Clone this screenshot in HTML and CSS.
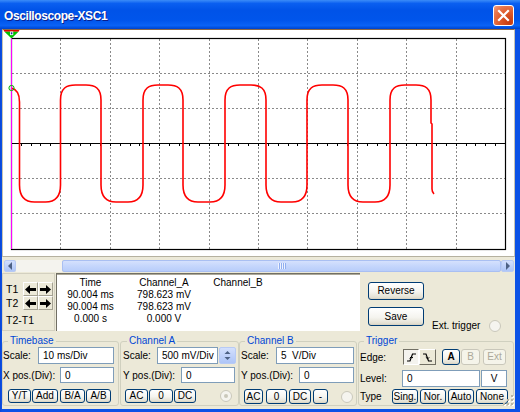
FILE: index.html
```html
<!DOCTYPE html>
<html>
<head>
<meta charset="utf-8">
<title>Oscilloscope-XSC1</title>
<link rel="stylesheet" href="styles.css">
</head>
<body>
<div class="window">
  <div class="titlebar">
    <span class="title">Oscilloscope-XSC1</span>
    <span class="close"><svg width="19" height="19" viewBox="0 0 19 19"><path d="M5 5 L14 14 M14 5 L5 14" stroke="#fff" stroke-width="2.2" stroke-linecap="square"/></svg></span>
  </div>
  <div class="client">
    <div class="graph">
      <svg class="scope" width="511" height="226" viewBox="3 30 511 226">
        <g stroke="#8a8a8a" stroke-width="1" stroke-dasharray="2 2" fill="none">
          <path d="M60.5 39V249M110.5 39V249M159.5 39V249M209.5 39V249M258.5 39V249M307.5 39V249M357.5 39V249M406.5 39V249M456.5 39V249"/>
          <path d="M12 73.5H505M12 108.5H505M12 178.5H505M12 213.5H505"/>
        </g>
        <path d="M11 143.5H505" stroke="#000" stroke-width="1"/>
        <path stroke="#000" stroke-width="1" d="M21.5 144v2M31.5 144v2M40.5 144v2M50.5 144v2M60.5 144v2M70.5 144v2M80.5 144v2M90.5 144v2M100.5 144v2M110.5 144v2M120.5 144v2M130.5 144v2M139.5 144v2M149.5 144v2M159.5 144v2M169.5 144v2M179.5 144v2M189.5 144v2M199.5 144v2M209.5 144v2M218.5 144v2M228.5 144v2M238.5 144v2M248.5 144v2M258.5 144v2M268.5 144v2M278.5 144v2M288.5 144v2M297.5 144v2M307.5 144v2M317.5 144v2M327.5 144v2M337.5 144v2M347.5 144v2M357.5 144v2M367.5 144v2M377.5 144v2M386.5 144v2M396.5 144v2M406.5 144v2M416.5 144v2M426.5 144v2M436.5 144v2M446.5 144v2M456.5 144v2M466.5 144v2M475.5 144v2M485.5 144v2M495.5 144v2"/>
        <rect x="11.5" y="38.5" width="494" height="211" fill="none" stroke="#000" stroke-width="1.2"/>
        <path fill="none" stroke="#ff0000" stroke-width="1.6" d="M11,88 C16,89 19.5,93 19.5,102 L19.5,185 C19.5,198 25.5,202 34.5,202 L45.5,202 C54.5,202 60.5,198 60.5,185 L60.5,100 C60.5,88 66.5,85 75.5,85 L86,85 C95,85 101,88 101,100 L101,185 C101,198 107,202 116,202 L128,202 C137,202 143,198 143,185 L143,100 C143,88 149,85 158,85 L168,85 C177,85 183,88 183,100 L183,185 C183,198 189,202 198,202 L210,202 C219,202 225,198 225,185 L225,100 C225,88 231,85 240,85 L251,85 C260,85 266,88 266,100 L266,185 C266,198 272,202 281,202 L292,202 C301,202 307,198 307,185 L307,100 C307,88 313,85 322,85 L333,85 C342,85 348,88 348,100 L348,185 C348,198 354,202 363,202 L375,202 C384,202 390,198 390,185 L390,100 C390,88 396,85 405,85 L416,85 C425,85 431,88 431,100 L431,123 L432,124 L432,189 C432,191 433,193 434,194"/>
        <path d="M11.5 36V249" stroke="#ff00ff" stroke-width="1"/>
        <circle cx="11.5" cy="88" r="2.6" fill="none" stroke="#00b000" stroke-width="1"/>
        <polygon points="3.5,30 19.5,30 18.5,31.8 4.5,31.8" fill="#e00000"/>
        <polygon points="4.5,31.8 18.5,31.8 11.5,38.5" fill="#00c000"/>
        <rect x="10" y="31.5" width="3.2" height="3.6" fill="#fff"/>
        <rect x="10.8" y="32.3" width="1.6" height="2" fill="#1a2a9a"/>
      </svg>
    </div>
    <div class="hscroll">
      <div class="sbtn"><svg width="6" height="8" viewBox="0 0 6 8"><polygon points="5,0 1,4 5,8" fill="#4d6185"/></svg></div>
      <div class="strack"></div>
      <div class="thumb"><span class="grip"></span></div>
      <div class="sbtn sbtn-r"><svg width="6" height="8" viewBox="0 0 6 8"><polygon points="1,0 5,4 1,8" fill="#4d6185"/></svg></div>
    </div>
    <div class="cursors">
      <div class="tpanel">
        <span class="tlabel">T1</span>
        <span class="abtn"><svg width="11" height="9" viewBox="0 0 11 9"><polygon points="0,4.5 5,0 5,3 11,3 11,6 5,6 5,9" fill="#000"/></svg></span>
        <span class="abtn"><svg width="11" height="9" viewBox="0 0 11 9"><polygon points="11,4.5 6,0 6,3 0,3 0,6 6,6 6,9" fill="#000"/></svg></span>
        <span class="tlabel">T2</span>
        <span class="abtn"><svg width="11" height="9" viewBox="0 0 11 9"><polygon points="0,4.5 5,0 5,3 11,3 11,6 5,6 5,9" fill="#000"/></svg></span>
        <span class="abtn"><svg width="11" height="9" viewBox="0 0 11 9"><polygon points="11,4.5 6,0 6,3 0,3 0,6 6,6 6,9" fill="#000"/></svg></span>
        <span class="tdiff">T2-T1</span>
      </div>
      <div class="readout">
        <span class="hd">Time</span><span class="hd">Channel_A</span><span class="hd">Channel_B</span>
        <span>90.004 ms</span><span>798.623 mV</span><span></span>
        <span>90.004 ms</span><span>798.623 mV</span><span></span>
        <span class="last">0.000 s</span><span class="last">0.000 V</span><span class="last"></span>
      </div>
      <div class="actions">
        <button class="btn big">Reverse</button>
        <div class="saverow">
          <button class="btn big">Save</button>
          <span class="ext">Ext. trigger</span>
          <span class="radio ext-radio"></span>
        </div>
      </div>
    </div>
    <div class="controls">
      <fieldset class="grp tb">
        <legend>Timebase</legend>
        <div class="row r1"><span class="lbl w35">Scale:</span><span class="field w76">10 ms/Div</span></div>
        <div class="row r2"><span class="lbl w57">X pos.(Div):</span><span class="field w54">0</span></div>
        <div class="row r3 tb-btns">
          <button class="btn w23">Y/T</button>
          <button class="btn w26 ml1">Add</button>
          <button class="btn w25 ml2">B/A</button>
          <button class="btn w25 ml1">A/B</button>
        </div>
      </fieldset>
      <fieldset class="grp ca">
        <legend>Channel A</legend>
        <div class="row r1"><span class="lbl w34">Scale:</span><span class="field w61">500 mV/Div</span>
          <span class="spin"><svg width="17" height="17" viewBox="0 0 17 17"><polygon points="5.5,7 8.5,4 11.5,7" fill="#4d6185"/><polygon points="5.5,10 8.5,13 11.5,10" fill="#4d6185"/></svg></span>
        </div>
        <div class="row r2"><span class="lbl w58">Y pos.(Div):</span><span class="field w54">0</span></div>
        <div class="row r3 ca-btns">
          <button class="btn w23">AC</button>
          <button class="btn w24 ml1">0</button>
          <button class="btn w22 ml1">DC</button>
          <span class="radio dot ca-radio"></span>
        </div>
      </fieldset>
      <fieldset class="grp cb">
        <legend>Channel B</legend>
        <div class="row r1"><span class="lbl w35">Scale:</span><span class="field w78">5&nbsp; V/Div</span></div>
        <div class="row r2"><span class="lbl w58">Y pos.(Div):</span><span class="field w55">0</span></div>
        <div class="row r3 cb-btns">
          <button class="btn w19">AC</button>
          <button class="btn w21 ml3">0</button>
          <button class="btn w22 ml2">DC</button>
          <button class="btn w15 ml2">-</button>
          <span class="radio cb-radio"></span>
        </div>
      </fieldset>
      <fieldset class="grp tr">
        <legend>Trigger</legend>
        <div class="row r1">
          <span class="lbl w43">Edge:</span>
          <span class="tog down"><svg width="11" height="11" viewBox="0 0 11 11"><path d="M1 9H4L6.5 2H10" fill="none" stroke="#000" stroke-width="1.2"/><path d="M3.6 6.4L5.4 4.6L7 6" fill="none" stroke="#000" stroke-width="1"/></svg></span>
          <span class="tog up"><svg width="11" height="11" viewBox="0 0 11 11"><path d="M1 2H4L6.5 9H10" fill="none" stroke="#000" stroke-width="1.2"/><path d="M3.8 5.2L5.6 6.9L7.2 5.3" fill="none" stroke="#000" stroke-width="1"/></svg></span>
          <button class="btn w18 ml6 bold">A</button>
          <button class="btn off w19 ml1">B</button>
          <button class="btn off w23 ml3">Ext</button>
        </div>
        <div class="row r2"><span class="lbl w42">Level:</span><span class="field w78">0</span><span class="field unit ml1">V</span></div>
        <div class="row r3">
          <span class="lbl w32">Type</span>
          <button class="btn w26">Sing.</button>
          <button class="btn w26 ml2">Nor.</button>
          <button class="btn w26 ml2">Auto</button>
          <button class="btn w32 ml2">None</button>
        </div>
      </fieldset>
    </div>
  </div>
  <svg class="sizegrip" width="12" height="12" viewBox="0 0 12 12">
    <g fill="#fff"><rect x="10" y="2" width="2" height="2"/><rect x="6" y="6" width="2" height="2"/><rect x="10" y="6" width="2" height="2"/><rect x="2" y="10" width="2" height="2"/><rect x="6" y="10" width="2" height="2"/><rect x="10" y="10" width="2" height="2"/></g>
    <g fill="#b9b5a3"><rect x="9" y="1" width="2" height="2"/><rect x="5" y="5" width="2" height="2"/><rect x="9" y="5" width="2" height="2"/><rect x="1" y="9" width="2" height="2"/><rect x="5" y="9" width="2" height="2"/><rect x="9" y="9" width="2" height="2"/></g>
  </svg>
</div>
</body>
</html>
```

FILE: styles.css
```css
* { box-sizing: border-box; }
html, body { margin: 0; padding: 0; }
body {
  font-family: "Liberation Sans", Arial, sans-serif;
  font-size: 10px;
  color: #000;
  background: #fff;
}
.window {
  position: relative;
  width: 520px;
  height: 412px;
  background: linear-gradient(90deg, #0a44d6 0, #0b52e6 2px, #0b52e6 100%);
  display: flex;
  flex-direction: column;
  overflow: hidden;
}
.titlebar {
  height: 29px;
  flex: none;
  display: flex;
  align-items: center;
  justify-content: space-between;
  padding: 0 6px 0 4px;
  background: linear-gradient(180deg, #3b8cf8 0%, #0a5ff0 12%, #0053e8 35%, #0055eb 70%, #0a62f5 88%, #0050e0 95%, #0342c8 100%);
}
.title {
  color: #fff;
  font-weight: bold;
  font-size: 12px;
  letter-spacing: -0.4px;
  text-shadow: 1px 1px 0 #0a1e8c;
  padding-top: 3px;
}
.close {
  width: 21px;
  height: 21px;
  margin-top: 2px;
  border: 1px solid #fff;
  border-radius: 3px;
  background: radial-gradient(circle at 80% 85%, #c63a0e 0%, #de5a2a 45%, #e8784f 75%, #f2a183 100%);
  display: flex;
  align-items: center;
  justify-content: center;
}
.close svg { display: block; }
.client {
  flex: 1;
  margin: 0 5px 3px 2px;
  background: #ece9d8;
  display: flex;
  flex-direction: column;
}
.graph {
  height: 228px;
  flex: none;
  background: #fff;
  border-top: 1px solid #8c6a48;
  border-left: 1px solid #c7c3b3;
  border-right: 1px solid #c7c3b3;
  border-bottom: 1px solid #b5b19f;
}
.scope { display: block; }

/* scrollbar */
.hscroll {
  flex: none;
  display: flex;
  height: 12px;
  margin: 3px 1px 0 2px;
}
.sbtn {
  width: 12px;
  flex: none;
  border: 1px solid #b7caf5;
  border-radius: 2px;
  background: linear-gradient(180deg, #d3e0fd 0%, #bccffa 60%, #aec5f7 100%);
  display: flex;
  align-items: center;
  justify-content: center;
}
.sbtn-r { width: 13px; }
.strack {
  width: 46px;
  flex: none;
  background: #f4f3ee;
}
.thumb {
  flex: 1;
  border: 1px solid #a9bff2;
  border-radius: 2px;
  background: linear-gradient(180deg, #d5e1fd 0%, #c5d6fc 50%, #b8cdfa 100%);
  display: flex;
  align-items: center;
  justify-content: center;
}
.grip {
  width: 8px;
  height: 6px;
  background: repeating-linear-gradient(90deg, #eef3fe 0 1px, #90aef0 1px 2px);
}

/* cursor section */
.cursors {
  flex: none;
  display: flex;
  height: 58px;
  margin-top: 1px;
}
.tpanel {
  width: 53px;
  flex: none;
  border: 1px solid #d3d0c0;
  padding: 8px 0 0 3px;
  display: grid;
  grid-template-columns: 17px 15px 15px;
  grid-template-rows: 14px 14px auto;
  align-content: start;
  font-size: 10.5px;
}
.tlabel { line-height: 14px; }
.tdiff {
  grid-column: 1 / 4;
  margin-top: 4px;
  line-height: 12px;
}
.abtn {
  border: 1px solid;
  border-color: #fff #a5a293 #a5a293 #fff;
  background: #ece9d8;
  display: flex;
  align-items: center;
  justify-content: center;
}
.abtn svg { display: block; }
.readout {
  width: 304px;
  flex: none;
  margin-left: 1px;
  background: #fff;
  border-top: 1px solid #716f64;
  border-left: 1px solid #716f64;
  box-shadow: inset 0 1px 0 #aca899;
  display: grid;
  grid-template-columns: 67px 80px 68px;
  grid-template-rows: 13px 11.5px 11.5px 14px;
  padding-top: 2px;
  text-align: center;
  line-height: 11.5px;
  white-space: nowrap;
}
.readout .hd { line-height: 13px; }
.readout .last { line-height: 14px; }
.actions {
  flex: 1;
  padding: 9px 0 0 8px;
  display: flex;
  flex-direction: column;
  align-items: flex-start;
}
.btn {
  font-family: "Liberation Sans", Arial, sans-serif;
  font-size: 10px;
  color: #000;
  height: 100%;
  padding: 0;
  margin: 0;
  border: 1px solid #003c74;
  border-radius: 3px;
  background: linear-gradient(180deg, #ffffff 0%, #f5f4ef 55%, #e3e0d3 90%, #d6d0c0 100%);
  flex: none;
  text-align: center;
  line-height: 1;
  white-space: nowrap;
}
.btn.big { width: 56px; height: 18px; }
.btn.bold { font-weight: bold; }
.btn.off {
  border-color: #c9c7ba;
  color: #aca899;
  background: #f5f4ea;
}
.saverow {
  display: flex;
  align-items: flex-end;
  margin-top: 7px;
}
.saverow .btn.big { height: 19px; }
.ext {
  margin-left: 8px;
  margin-bottom: -6px;
  line-height: 12px;
  white-space: nowrap;
}
.radio {
  width: 12px;
  height: 12px;
  flex: none;
  border-radius: 50%;
  border: 1px solid #cac8bb;
  background: #f5f4ef;
  display: flex;
  align-items: center;
  justify-content: center;
}
.radio.dot::after {
  content: "";
  width: 4px;
  height: 4px;
  border-radius: 50%;
  background: #cac8bb;
}
.ext-radio { margin-left: 9px; margin-bottom: -6px; }

/* bottom control groups */
.controls {
  flex: none;
  display: flex;
  height: 78px;
  padding-top: 4px;
}
.grp {
  margin: 0;
  padding: 0 0 0 1px;
  border: 1px solid #d0d0bf;
  border-radius: 3px;
  height: 71px;
  min-width: 0;
  flex: none;
}
.grp legend {
  padding: 0 2px;
  margin-left: 4px;
  color: #0046d5;
  line-height: 12px;
  font-size: 10px;
}
.tb { width: 117px; padding-left: 0; }
.tb legend { margin-left: 5px; }
.ca { width: 119px; margin-left: 1px; padding-left: 2px; }
.cb { width: 118px; padding-left: 1px; }
.tr { width: 156px; margin-left: 1px; padding-left: 1px; }

.row { display: flex; align-items: center; }
.r1 { height: 17px; }
.r2 { height: 16px; margin-top: 3px; }
.r3 { height: 14px; margin-top: 6px; }
.cb .r3 { height: 15px; }
.tr .r1 { height: 16px; margin-top: 2px; }
.tr .r2 { height: 17px; margin-top: 5px; }
.tr .r3 { height: 15px; margin-top: 2px; }

.lbl { flex: none; white-space: nowrap; }
.field {
  height: 100%;
  flex: none;
  border: 1px solid #7f9db9;
  background: #fff;
  padding-left: 4px;
  display: flex;
  align-items: center;
  white-space: nowrap;
}
.field.unit { width: 26px; padding-left: 0; justify-content: center; }
.spin {
  width: 17px;
  height: 17px;
  flex: none;
  margin-left: 1px;
  border: 1px solid #b7caf5;
  border-radius: 2px;
  background: linear-gradient(180deg, #d3e0fd 0%, #bccffa 60%, #aec5f7 100%);
  display: flex;
  align-items: center;
  justify-content: center;
}
.spin svg { display: block; margin: -1px; }
.tog {
  width: 16px;
  height: 100%;
  flex: none;
  border: 1px solid;
  background: #ece9d8;
  display: flex;
  align-items: center;
  justify-content: center;
}
.tog.down { border-color: #716f64 #fff #fff #716f64; background: #f4f3ee; }
.tog.up { width: 17px; border-color: #fff #716f64 #716f64 #fff; }

.tb-btns { margin-left: 5px; }
.ca-btns { margin-left: 2px; }
.cb-btns { margin-left: 3px; }
.ca-radio { margin-left: 24px; }
.cb-radio { margin-left: 13px; }

.w15 { width: 15px; } .w18 { width: 18px; } .w19 { width: 19px; }
.w21 { width: 21px; } .w22 { width: 22px; } .w23 { width: 23px; }
.w24 { width: 24px; } .w25 { width: 25px; } .w26 { width: 26px; }
.w32 { width: 32px; } .w34 { width: 34px; } .w35 { width: 35px; }
.w42 { width: 42px; } .w43 { width: 43px; } .w54 { width: 54px; }
.w55 { width: 55px; } .w57 { width: 57px; } .w58 { width: 58px; }
.w61 { width: 61px; } .w76 { width: 76px; } .w78 { width: 78px; }
.ml1 { margin-left: 1px; } .ml2 { margin-left: 2px; }
.ml3 { margin-left: 3px; } .ml6 { margin-left: 6px; }

.sizegrip {
  position: absolute;
  left: 502px;
  top: 394px;
}
```
